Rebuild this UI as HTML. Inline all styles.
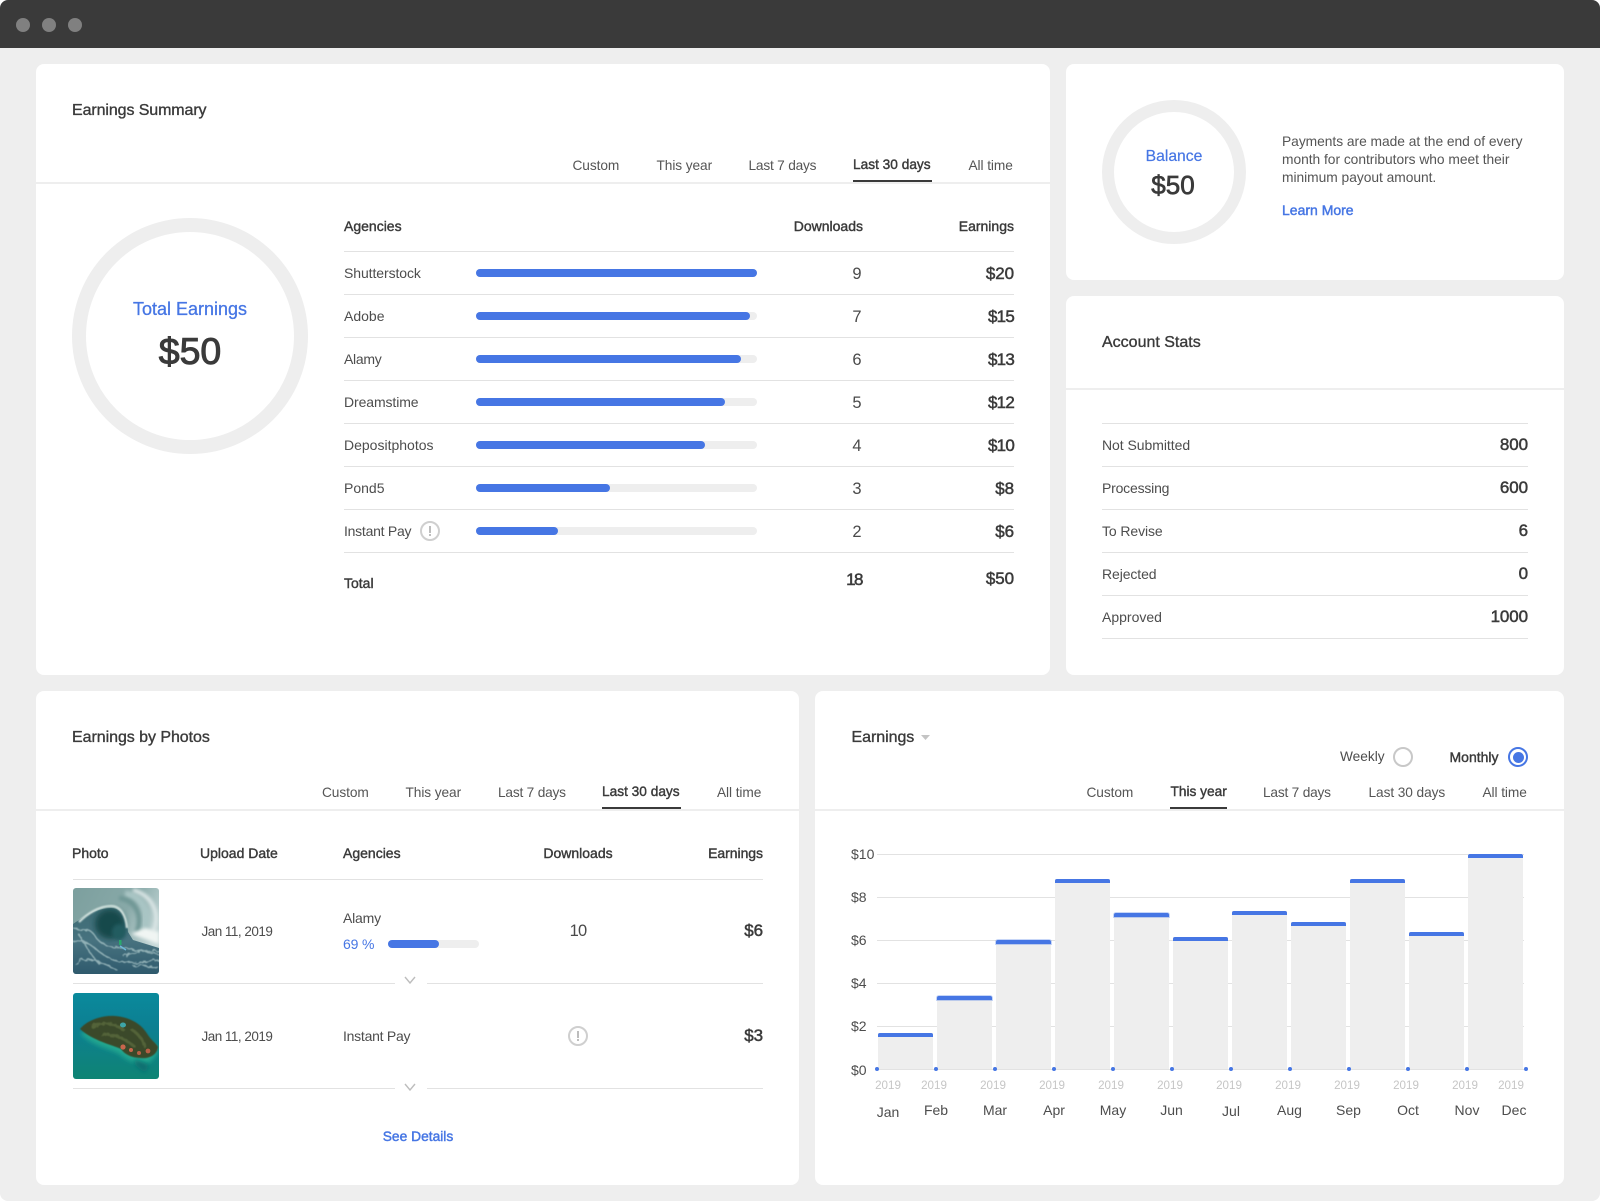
<!DOCTYPE html>
<html><head><meta charset="utf-8"><title>Earnings</title>
<style>
*{box-sizing:border-box;margin:0;padding:0}
html,body{background:#fff;width:1600px;height:1201px;overflow:hidden}
body{font-family:"Liberation Sans",sans-serif;color:#4d4d4d;font-size:14px}
#r{position:relative;width:1600px;height:1201px;background:#eee;border-radius:8px;overflow:hidden}
#bar{position:absolute;left:0;top:0;width:1600px;height:48px;background:#3a3a3a}
.d{position:absolute;top:18px;width:14px;height:14px;border-radius:50%;background:#808080}
.card{position:absolute;background:#fff;border-radius:8px}
.b{position:absolute}
.t{position:absolute;white-space:nowrap;line-height:20px;height:20px}
.c{transform:translateX(-50%)}
.s{-webkit-text-stroke:.4px currentColor;color:#3a3a3a}
.h{font-size:16px;color:#3a3a3a;-webkit-text-stroke:.35px currentColor;letter-spacing:-.1px}
.n{font-size:16.5px;color:#4a4a4a}
.m{font-size:17px;-webkit-text-stroke:.5px currentColor;color:#3a3a3a;letter-spacing:-.1px}
.m1{letter-spacing:-.8px}
.bl{color:#4676e4}
.tb{font-size:13.7px;color:#555;letter-spacing:-.08px}
.ta{-webkit-text-stroke:.4px currentColor;color:#3a3a3a;letter-spacing:0}
.l{position:absolute;height:1px;background:#e2e2e2}
.dv{position:absolute;height:2px;background:#eee}
.u{position:absolute;height:2px;background:#3a3a3a}
.tr{position:absolute;height:8px;width:281px;left:476px;border-radius:4px;background:#eee}
.fl{position:absolute;left:0;top:0;height:8px;border-radius:4px;background:#4676e4}
.ic{position:absolute;width:20px;height:20px;border:2px solid #cfcfcf;border-radius:50%;transform:translate(-50%,-50%)}
.ic:before{content:"";position:absolute;left:7px;top:3px;width:2px;height:7px;background:#bdbdbd}
.ic:after{content:"";position:absolute;left:7px;top:11px;width:2px;height:2px;background:#bdbdbd}
.g{position:absolute;left:877px;width:647px;height:1px;background:#e2e2e2}
.gb{position:absolute;width:55px;background:#eee}
.gb i{position:absolute;left:0;top:0;width:100%;height:4px;background:#4676e4;border-radius:2px 2px 0 0}
.hl i{box-shadow:0 0 0 1px rgba(70,118,228,.3)}
.o{position:absolute;top:1067px;width:4px;height:4px;border-radius:50%;background:#4676e4}
.y{font-size:11.6px;color:#c6c6c6}
.ylab{font-size:14px;color:#4d4d4d}
.dt{font-size:13.5px;letter-spacing:-.52px}
</style></head><body><div id="r">
<div id="bar"></div>
<div class="d" style="left:16px"></div><div class="d" style="left:42px"></div><div class="d" style="left:68px"></div>

<div class="card" style="left:36px;top:64px;width:1014px;height:611px"></div>
<div class="card" style="left:1066px;top:64px;width:498px;height:216px"></div>
<div class="card" style="left:1066px;top:296px;width:498px;height:379px"></div>
<div class="card" style="left:36px;top:691px;width:763px;height:494px"></div>
<div class="card" style="left:815px;top:691px;width:749px;height:494px"></div>

<!-- Earnings Summary -->
<div class="t h" style="left:72px;top:101px">Earnings Summary</div>
<div class="t tb" style="left:572.5px;top:156px">Custom</div>
<div class="t tb" style="left:656.5px;top:156px">This year</div>
<div class="t tb" style="left:748.5px;top:156px;letter-spacing:-.2px">Last 7 days</div>
<div class="t tb ta" style="left:853px;top:155px">Last 30 days</div>
<div class="t tb" style="left:968.5px;top:156px">All time</div>
<div class="u" style="left:853px;top:180px;width:79px"></div>
<div class="dv" style="left:36px;top:182px;width:1014px"></div>

<div class="b" style="left:72px;top:218px;width:236px;height:236px;border:14px solid #eee;border-radius:50%"></div>
<div class="t c bl" style="left:190px;top:299px;font-size:18px;-webkit-text-stroke:.3px currentColor">Total Earnings</div>
<div class="t c" style="left:190px;top:341px;font-size:37.5px;color:#3a3a3a;-webkit-text-stroke:1px currentColor">$50</div>

<div class="t s" style="left:344px;top:216px">Agencies</div>
<div class="t s" style="right:737px;top:216px">Downloads</div>
<div class="t s" style="right:586px;top:216px">Earnings</div>
<div class="l" style="left:344px;width:670px;top:251px"></div>
<div class="l" style="left:344px;width:670px;top:294px"></div>
<div class="l" style="left:344px;width:670px;top:337px"></div>
<div class="l" style="left:344px;width:670px;top:380px"></div>
<div class="l" style="left:344px;width:670px;top:423px"></div>
<div class="l" style="left:344px;width:670px;top:466px"></div>
<div class="l" style="left:344px;width:670px;top:509px"></div>
<div class="l" style="left:344px;width:670px;top:552px"></div>

<div class="t" style="left:344px;top:263px;letter-spacing:-.08px">Shutterstock</div>
<div class="t" style="left:344px;top:306px">Adobe</div>
<div class="t" style="left:344px;top:349px;letter-spacing:-.3px">Alamy</div>
<div class="t" style="left:344px;top:392px;letter-spacing:-.1px">Dreamstime</div>
<div class="t" style="left:344px;top:435px">Depositphotos</div>
<div class="t" style="left:344px;top:478px">Pond5</div>
<div class="t" style="left:344px;top:521px;letter-spacing:-.25px">Instant Pay</div>
<div class="ic" style="left:430px;top:531px"></div>

<div class="tr" style="top:269px"><div class="fl" style="width:281px"></div></div>
<div class="tr" style="top:312px"><div class="fl" style="width:274px"></div></div>
<div class="tr" style="top:355px"><div class="fl" style="width:265px"></div></div>
<div class="tr" style="top:398px"><div class="fl" style="width:249px"></div></div>
<div class="tr" style="top:441px"><div class="fl" style="width:229px"></div></div>
<div class="tr" style="top:484px"><div class="fl" style="width:134px"></div></div>
<div class="tr" style="top:527px"><div class="fl" style="width:82px"></div></div>

<div class="t c n" style="left:857px;top:264px">9</div>
<div class="t c n" style="left:857px;top:307px">7</div>
<div class="t c n" style="left:857px;top:350px">6</div>
<div class="t c n" style="left:857px;top:393px">5</div>
<div class="t c n" style="left:857px;top:436px">4</div>
<div class="t c n" style="left:857px;top:479px">3</div>
<div class="t c n" style="left:857px;top:522px">2</div>

<div class="t m" style="right:586px;top:264px">$20</div>
<div class="t m m1" style="right:586px;top:307px">$15</div>
<div class="t m m1" style="right:586px;top:350px">$13</div>
<div class="t m m1" style="right:586px;top:393px">$12</div>
<div class="t m m1" style="right:586px;top:436px">$10</div>
<div class="t m" style="right:586px;top:479px">$8</div>
<div class="t m" style="right:586px;top:522px">$6</div>

<div class="t s" style="left:344px;top:573px">Total</div>
<div class="t m" style="right:738px;top:570px;letter-spacing:-1.5px">18</div>
<div class="t m" style="right:586px;top:569px">$50</div>

<!-- Balance -->
<div class="b" style="left:1102px;top:100px;width:144px;height:144px;border:12px solid #eee;border-radius:50%"></div>
<div class="t c bl" style="left:1174px;top:147px;font-size:15.7px;-webkit-text-stroke:.2px currentColor">Balance</div>
<div class="t c" style="left:1173px;top:175px;font-size:26px;color:#3a3a3a;-webkit-text-stroke:.7px currentColor">$50</div>
<div class="t" style="left:1282px;top:132px;font-size:13.8px;color:#555;letter-spacing:-.03px">Payments are made at the end of every</div>
<div class="t" style="left:1282px;top:150px;font-size:13.8px;color:#555;letter-spacing:-.03px">month for contributors who meet their</div>
<div class="t" style="left:1282px;top:168px;font-size:13.8px;color:#555;letter-spacing:-.03px">minimum payout amount.</div>
<div class="t bl" style="left:1282px;top:200px;-webkit-text-stroke:.45px currentColor">Learn More</div>

<!-- Account Stats -->
<div class="t h" style="left:1102px;top:332px;letter-spacing:0;margin-top:1px">Account Stats</div>
<div class="dv" style="left:1066px;top:388px;width:498px"></div>
<div class="l" style="left:1102px;width:426px;top:423px"></div>
<div class="l" style="left:1102px;width:426px;top:466px"></div>
<div class="l" style="left:1102px;width:426px;top:509px"></div>
<div class="l" style="left:1102px;width:426px;top:552px"></div>
<div class="l" style="left:1102px;width:426px;top:595px"></div>
<div class="l" style="left:1102px;width:426px;top:638px"></div>
<div class="t" style="left:1102px;top:435px;letter-spacing:-.05px">Not Submitted</div>
<div class="t" style="left:1102px;top:478px;letter-spacing:-.2px">Processing</div>
<div class="t" style="left:1102px;top:521px;letter-spacing:-.1px">To Revise</div>
<div class="t" style="left:1102px;top:564px;letter-spacing:-.1px">Rejected</div>
<div class="t" style="left:1102px;top:607px">Approved</div>
<div class="t m" style="right:72px;top:435px">800</div>
<div class="t m" style="right:72px;top:478px">600</div>
<div class="t m" style="right:72px;top:521px">6</div>
<div class="t m" style="right:72px;top:564px">0</div>
<div class="t m" style="right:72px;top:607px">1000</div>

<!-- Earnings by Photos -->
<div class="t h" style="left:72px;top:728px;letter-spacing:-.05px">Earnings by Photos</div>
<div class="t tb" style="left:322px;top:783px">Custom</div>
<div class="t tb" style="left:405.5px;top:783px">This year</div>
<div class="t tb" style="left:498px;top:783px;letter-spacing:-.2px">Last 7 days</div>
<div class="t tb ta" style="left:602px;top:782px">Last 30 days</div>
<div class="t tb" style="left:717px;top:783px">All time</div>
<div class="u" style="left:602px;top:807px;width:79px"></div>
<div class="dv" style="left:36px;top:809px;width:763px"></div>

<div class="t s" style="left:72px;top:843px">Photo</div>
<div class="t s" style="left:200px;top:843px">Upload Date</div>
<div class="t s" style="left:343px;top:843px">Agencies</div>
<div class="t s c" style="left:578px;top:843px">Downloads</div>
<div class="t s" style="right:837px;top:843px;letter-spacing:-.05px">Earnings</div>
<div class="l" style="left:73px;width:690px;top:879px"></div>

<svg class="b" style="left:73px;top:888px;border-radius:3px" width="86" height="86" viewBox="0 0 86 86">
<defs>
<linearGradient id="w0" x1="0" y1="0" x2="1" y2=".5"><stop offset="0" stop-color="#7c9f9e"/><stop offset=".6" stop-color="#88a9a8"/><stop offset="1" stop-color="#c6d8d8"/></linearGradient>
<linearGradient id="w1" x1="0" y1="0" x2="0" y2="1"><stop offset="0" stop-color="#3d6c74"/><stop offset=".5" stop-color="#47727f"/><stop offset="1" stop-color="#2f5a6d"/></linearGradient>
<filter id="f1" x="-20%" y="-20%" width="140%" height="140%"><feGaussianBlur stdDeviation="1.600"/></filter>
<filter id="f2" x="-20%" y="-20%" width="140%" height="140%"><feGaussianBlur stdDeviation=".8"/></filter>
<filter id="f3" x="-50%" y="-50%" width="200%" height="200%"><feGaussianBlur stdDeviation="3"/></filter>
<filter id="f4" x="-10%" y="-10%" width="120%" height="120%"><feTurbulence type="fractalNoise" baseFrequency=".18" numOctaves="2" seed="4" result="n"/><feDisplacementMap in="SourceGraphic" in2="n" scale="6"/><feGaussianBlur stdDeviation=".55"/></filter>
</defs>
<rect width="86" height="86" fill="url(#w0)"/>
<path d="M52 6C70 8 78 26 70 44" fill="none" stroke="#a9c5c4" stroke-width="7" filter="url(#f1)"/>
<path d="M46 10C62 12 70 26 64 44" fill="none" stroke="#6f9795" stroke-width="5" filter="url(#f1)"/>
<path d="M60 2C80 8 88 26 80 44" fill="none" stroke="#dbe6e6" stroke-width="4" filter="url(#f1)"/>
<path d="M58 46L86 56V44L72 40Z" fill="#f0f5f3" filter="url(#f1)"/>
<path d="M0 36C12 28 24 20 38 20C50 20 54 32 55 44L60 52L86 60V86H0Z" fill="url(#w1)"/>
<ellipse cx="37" cy="36" rx="15" ry="15" fill="#17484c" filter="url(#f3)"/>
<ellipse cx="46" cy="44" rx="7" ry="8" fill="#245c60" filter="url(#f1)"/>
<path d="M6 34C14 26 26 18 38 18C48 18 53 28 54 40" fill="none" stroke="#cfe0dc" stroke-width="2.2" filter="url(#f2)"/>
<path d="M0 40C8 44 16 38 22 48S38 60 52 60L86 66M0 54C14 50 20 60 32 68S60 76 86 72M2 76C14 66 28 74 44 82M50 68C60 64 74 62 86 62M6 46C10 54 14 62 26 76M60 78C68 76 76 78 86 80" fill="none" stroke="#adc9cb" stroke-width="1.400" opacity=".75" filter="url(#f4)"/>
<rect x="46" y="52" width="2.500" height="5" fill="#2aa96c"/>
<path d="M47 58L53 62" stroke="#6fb9d9" stroke-width="1.500"/>
</svg>

<svg class="b" style="left:73px;top:993px;border-radius:3px" width="86" height="86" viewBox="0 0 86 86">
<defs>
<linearGradient id="i0" x1="0" y1="0" x2="0" y2="1"><stop offset="0" stop-color="#0a8a9c"/><stop offset=".4" stop-color="#0d7f92"/><stop offset="1" stop-color="#0e8474"/></linearGradient>
<filter id="i1" x="-30%" y="-30%" width="160%" height="160%"><feGaussianBlur stdDeviation="2.500"/></filter>
<filter id="i2"><feGaussianBlur stdDeviation=".5"/></filter>
<filter id="i3" x="-10%" y="-10%" width="120%" height="120%"><feTurbulence type="fractalNoise" baseFrequency=".3" numOctaves="2" seed="7" result="n"/><feDisplacementMap in="SourceGraphic" in2="n" scale="5"/><feGaussianBlur stdDeviation=".5"/></filter>
</defs>
<rect width="86" height="86" fill="url(#i0)"/>
<path d="M7 40C20 54 40 56 48 62C54 68 66 72 76 70C80 66 86 60 85 54L40 30Z" fill="#23a78f" filter="url(#i1)"/>
<path d="M62 66L76 72L72 80L62 72Z" fill="#0f6e70" filter="url(#i1)"/>
<path d="M7 36C14 27 30 22 42 23C56 24 68 30 75 42C78 47 83 50 85 54C84 62 76 66 68 65C60 65 52 62 48 56C40 52 20 48 7 36Z" fill="#3b4a2a" filter="url(#i2)"/>
<path d="M18 34C30 28 42 30 52 38M28 42C38 40 50 44 62 54M58 36C64 40 70 46 72 54" stroke="#5a6a3c" stroke-width="3" fill="none" opacity=".8" filter="url(#i3)"/>
<ellipse cx="50" cy="32" rx="3" ry="2.500" fill="#3ea6a8"/>
<circle cx="50" cy="54" r="2.600" fill="#c8664c"/><circle cx="58" cy="57" r="2" fill="#c8664c"/><circle cx="66" cy="60" r="2" fill="#b85f45"/><circle cx="75" cy="58" r="2.400" fill="#b85f45"/>
</svg>

<div class="t dt" style="left:201.5px;top:922px">Jan 11, 2019</div>
<div class="t" style="left:343px;top:908px;letter-spacing:-.2px">Alamy</div>
<div class="t bl" style="left:343px;top:934px;letter-spacing:-.15px">69 %</div>
<div class="b" style="left:388px;top:940px;width:91px;height:8px;border-radius:4px;background:#eee"><div class="fl" style="width:51px"></div></div>
<div class="t c n" style="left:578px;top:921px;letter-spacing:-.8px">10</div>
<div class="t m" style="right:837px;top:921px">$6</div>

<div class="l" style="left:73px;width:322px;top:983px"></div>
<div class="l" style="left:427px;width:336px;top:983px"></div>
<svg class="b" style="left:404px;top:976px" width="12" height="8" viewBox="0 0 12 8"><path d="M1 1L6 7L11 1" fill="none" stroke="#bdbdbd" stroke-width="1.400"/></svg>

<div class="t dt" style="left:201.5px;top:1027px">Jan 11, 2019</div>
<div class="t" style="left:343px;top:1026px;letter-spacing:-.25px">Instant Pay</div>
<div class="ic" style="left:578px;top:1036px"></div>
<div class="t m" style="right:837px;top:1026px">$3</div>

<div class="l" style="left:73px;width:322px;top:1088px"></div>
<div class="l" style="left:427px;width:336px;top:1088px"></div>
<svg class="b" style="left:404px;top:1083px" width="12" height="8" viewBox="0 0 12 8"><path d="M1 1L6 7L11 1" fill="none" stroke="#bdbdbd" stroke-width="1.400"/></svg>

<div class="t c bl" style="left:418px;top:1127px;-webkit-text-stroke:.45px currentColor;font-size:13.8px">See Details</div>

<!-- Earnings chart -->
<div class="t h" style="left:851.5px;top:728px;letter-spacing:-.05px">Earnings</div>
<svg class="b" style="left:921px;top:735px" width="9" height="5" viewBox="0 0 9 5"><path d="M0 0H9L4.500 5Z" fill="#c4c4c4"/></svg>
<div class="t" style="left:1340px;top:747px;font-size:13.7px">Weekly</div>
<div class="b" style="left:1393px;top:747px;width:20px;height:20px;border:2px solid #c8c8c8;border-radius:50%"></div>
<div class="t s" style="left:1449.5px;top:747px;font-size:14px">Monthly</div>
<div class="b" style="left:1508px;top:747px;width:20px;height:20px;border:2px solid #4676e4;border-radius:50%"><div class="b" style="left:2.500px;top:2.500px;width:11px;height:11px;border-radius:50%;background:#4676e4"></div></div>

<div class="t tb" style="left:1086.5px;top:783px">Custom</div>
<div class="t tb ta" style="left:1170.5px;top:782px">This year</div>
<div class="t tb" style="left:1263px;top:783px;letter-spacing:-.2px">Last 7 days</div>
<div class="t tb" style="left:1368.500px;top:783px">Last 30 days</div>
<div class="t tb" style="left:1482.500px;top:783px">All time</div>
<div class="u" style="left:1170px;top:807px;width:57px"></div>
<div class="dv" style="left:815px;top:809px;width:749px"></div>

<div class="g" style="top:854px"></div>
<div class="g" style="top:897px"></div>
<div class="g" style="top:940px"></div>
<div class="g" style="top:983px"></div>
<div class="g" style="top:1026px"></div>
<div class="g" style="top:1069px"></div>

<div class="t" style="left:851px;top:844px">$10</div>
<div class="t" style="left:851px;top:887px">$8</div>
<div class="t" style="left:851px;top:930px">$6</div>
<div class="t" style="left:851px;top:973px">$4</div>
<div class="t" style="left:851px;top:1016px">$2</div>
<div class="t" style="left:851px;top:1060px">$0</div>

<div class="gb" style="left:878px;top:1033px;height:36px"><i></i></div>
<div class="gb hl" style="left:937px;top:996px;height:73px"><i></i></div>
<div class="gb hl" style="left:996px;top:940px;height:129px"><i></i></div>
<div class="gb" style="left:1055px;top:879px;height:190px"><i></i></div>
<div class="gb hl" style="left:1114px;top:913px;height:156px"><i></i></div>
<div class="gb" style="left:1173px;top:937px;height:132px"><i></i></div>
<div class="gb" style="left:1232px;top:911px;height:158px"><i></i></div>
<div class="gb" style="left:1291px;top:922px;height:147px"><i></i></div>
<div class="gb" style="left:1350px;top:879px;height:190px"><i></i></div>
<div class="gb" style="left:1409px;top:932px;height:137px"><i></i></div>
<div class="gb" style="left:1468px;top:854px;height:215px"><i></i></div>

<div class="o" style="left:875px"></div><div class="o" style="left:934px"></div><div class="o" style="left:993px"></div><div class="o" style="left:1052px"></div><div class="o" style="left:1111px"></div><div class="o" style="left:1170px"></div><div class="o" style="left:1229px"></div><div class="o" style="left:1288px"></div><div class="o" style="left:1347px"></div><div class="o" style="left:1406px"></div><div class="o" style="left:1465px"></div><div class="o" style="left:1524px"></div>

<div class="t c y" style="left:888px;top:1076px">2019</div>
<div class="t c y" style="left:934px;top:1076px">2019</div>
<div class="t c y" style="left:993px;top:1076px">2019</div>
<div class="t c y" style="left:1052px;top:1076px">2019</div>
<div class="t c y" style="left:1111px;top:1076px">2019</div>
<div class="t c y" style="left:1170px;top:1076px">2019</div>
<div class="t c y" style="left:1229px;top:1076px">2019</div>
<div class="t c y" style="left:1288px;top:1076px">2019</div>
<div class="t c y" style="left:1347px;top:1076px">2019</div>
<div class="t c y" style="left:1406px;top:1076px">2019</div>
<div class="t c y" style="left:1465px;top:1076px">2019</div>
<div class="t c y" style="left:1511px;top:1076px">2019</div>

<div class="t c ylab" style="left:888px;top:1102px">Jan</div>
<div class="t c ylab" style="left:936px;top:1100px">Feb</div>
<div class="t c ylab" style="left:995px;top:1100px">Mar</div>
<div class="t c ylab" style="left:1054px;top:1100px">Apr</div>
<div class="t c ylab" style="left:1113px;top:1100px">May</div>
<div class="t c ylab" style="left:1171.500px;top:1100px">Jun</div>
<div class="t c ylab" style="left:1231px;top:1101px">Jul</div>
<div class="t c ylab" style="left:1289.500px;top:1100px">Aug</div>
<div class="t c ylab" style="left:1348.500px;top:1100px">Sep</div>
<div class="t c ylab" style="left:1408px;top:1100px">Oct</div>
<div class="t c ylab" style="left:1467px;top:1100px">Nov</div>
<div class="t c ylab" style="left:1514px;top:1100px">Dec</div>
</div></body></html>
